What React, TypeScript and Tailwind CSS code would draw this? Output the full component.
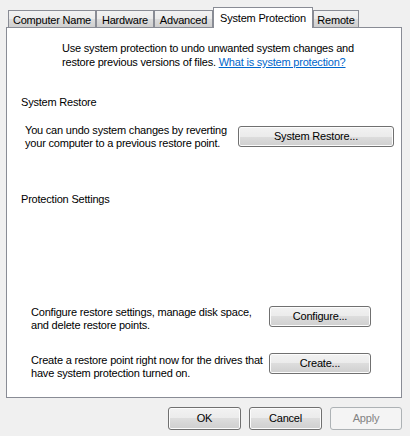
import React from "react";

const font = { fontFamily: '"Liberation Sans", Arial, sans-serif' };

const btn =
  "flex items-center justify-center rounded-[3px] border border-[#707070] bg-[linear-gradient(180deg,#f2f2f2_0%,#ebebeb_50%,#dddddd_50%,#cfcfcf_100%)] shadow-[inset_0_0_0_1px_#fcfcfc] text-[#000]";

function Tab({ label, active, w }: { label: string; active?: boolean; w: string }) {
  if (active) {
    return (
      <div
        className={`relative z-10 -mb-px flex h-[21px] ${w} items-start justify-center whitespace-nowrap border border-b-0 border-[#898c95] bg-white pt-[3px] leading-[14px]`}
      >
        {label}
      </div>
    );
  }
  return (
    <div
      className={`flex h-[17px] ${w} items-start justify-center whitespace-nowrap border border-b-0 border-[#898c95] bg-[linear-gradient(180deg,#f2f2f2_0%,#ebebeb_50%,#dddddd_50%,#cfcfcf_100%)] pt-[2px] leading-[14px]`}
    >
      {label}
    </div>
  );
}

export default function App() {
  return (
    <div
      className="h-[436px] w-[410px] whitespace-nowrap bg-[#f0f0f0] pl-[6px] pt-[7px] text-[11px] leading-[13px] tracking-[-0.2px] text-black"
      style={font}
    >
      <div className="flex h-[20px] items-end pl-[2px]">
        <Tab label="Computer Name" w="w-[88px]" />
        <Tab label="Hardware" w="w-[58px]" />
        <Tab label="Advanced" w="w-[59px]" />
        <Tab label="System Protection" w="w-[100px]" active />
        <Tab label="Remote" w="w-[46px]" />
      </div>
      <div className="flex h-[371px] w-[396px] flex-col border border-[#898c95] bg-white">
        <p className="ml-[55px] mt-[13px] leading-[14px]">
          Use system protection to undo unwanted system changes and
          <br />
          restore previous versions of files.{" "}
          <span className="text-[#0066cc] underline">What is system protection?</span>
        </p>
        <p className="ml-[14px] mt-[27px]">System Restore</p>
        <div className="mt-[15px] flex items-start">
          <p className="ml-[18px] w-[210px]">
            You can undo system changes by reverting
            <br />
            your computer to a previous restore point.
          </p>
          <button className={`${btn} ml-[3px] mt-[2px] h-[21px] w-[156px]`}>System Restore...</button>
        </div>
        <p className="ml-[14px] mt-[43px]">Protection Settings</p>
        <div className="mt-[100px] flex items-start">
          <p className="ml-[24px] w-[236px]">
            Configure restore settings, manage disk space,
            <br />
            and delete restore points.
          </p>
          <button className={`${btn} ml-[2px] h-[21px] w-[102px]`}>Configure...</button>
        </div>
        <div className="mt-[21px] flex items-start">
          <p className="ml-[24px] mt-[1px] w-[236px]">
            Create a restore point right now for the drives that
            <br />
            have system protection turned on.
          </p>
          <button className={`${btn} ml-[2px] h-[21px] w-[102px]`}>Create...</button>
        </div>
      </div>
      <div className="mt-[9px] flex gap-[8px] pl-[162px]">
        <button className={`${btn} h-[23px] w-[73px]`}>OK</button>
        <button className={`${btn} h-[23px] w-[73px]`}>Cancel</button>
        <button className="flex h-[23px] w-[72px] items-center justify-center rounded-[3px] border border-[#adb2b5] bg-[#f4f4f4] text-[#838383]">
          Apply
        </button>
      </div>
    </div>
  );
}
